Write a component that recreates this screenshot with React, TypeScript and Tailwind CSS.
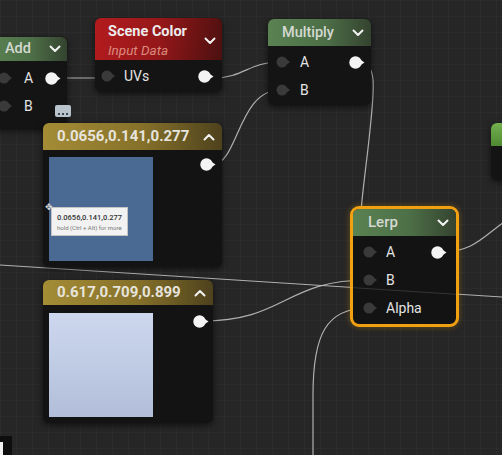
import React from 'react'

const greenHead = 'bg-[linear-gradient(90deg,#5a8252_0%,#4d6f47_55%,#34432f_100%)]'
const goldHead = 'bg-[linear-gradient(90deg,#a48c36_0%,#86712a_55%,#4e421d_100%)]'

function InPin() {
    return (
        <svg width="16" height="12" viewBox="0 0 16 12" className="shrink-0">
            <circle cx="6" cy="6" r="5.5" fill="#3a3a3a" />
            <path d="M10.5 3.2 L14 6 L10.5 8.8 Z" fill="#3a3a3a" />
        </svg>
    )
}

function OutPin() {
    return (
        <svg width="17" height="13" viewBox="0 0 17 13" className="shrink-0">
            <circle cx="6.5" cy="6.5" r="6.2" fill="#f4f4f4" />
            <path d="M11.5 3.8 L15.5 6.5 L11.5 9.2 Z" fill="#f4f4f4" />
        </svg>
    )
}

function Chevron({ up = false }: { up?: boolean }) {
    return (
        <svg width="12" height="8" viewBox="0 0 12 8" className="shrink-0">
            <path
                d={up ? 'M1.5 6.5 L6 2 L10.5 6.5' : 'M1.5 1.5 L6 6 L10.5 1.5'}
                fill="none"
                stroke="#f2f2f2"
                strokeWidth="2"
                strokeLinecap="round"
                strokeLinejoin="round"
            />
        </svg>
    )
}

function Wires() {
    return (
        <svg width="502" height="455" viewBox="0 0 502 455" className="absolute inset-0 pointer-events-none">
            <g fill="none" stroke="#c8c8c8" strokeWidth="1.2" strokeOpacity="0.85">
                {/* add -> scene color */}
                <path d="M52 78 L104 78" />
                {/* scene color -> multiply A */}
                <path d="M212 78 C245 78 248 62 280 62" />
                {/* constant -> multiply B */}
                <path d="M212 165 C238 165 238 90 280 90" />
                {/* multiply -> lerp A */}
                <path d="M359 62 C378 62 374 90 370 130 C364 190 352 252 368 252" />
                {/* lerp -> right node */}
                <path d="M442 252 C472 252 482 238 504 222" />
                {/* long wire */}
                <path d="M0 265 C150 274 300 284 502 297" />
                {/* constant 2 -> lerp B */}
                <path d="M202 321 C285 321 285 280 368 280" />
                {/* alpha from below */}
                <path d="M368 308 C326 308 313 335 313 395 L313 456" />
            </g>
        </svg>
    )
}

export default function App() {
    return (
        <div className="relative w-[502px] h-[455px] overflow-hidden bg-[#262626] bg-[linear-gradient(rgba(255,255,255,0.025)_1px,transparent_1px),linear-gradient(90deg,rgba(255,255,255,0.025)_1px,transparent_1px)] bg-[size:16px_16px] font-[Roboto,sans-serif] text-[#e4e4e4]">
            <Wires />

            {/* Add */}
            <div className="absolute left-[-12px] top-[37px] w-[79px] h-[92px] rounded-md bg-[#141414] shadow-[0_2px_6px_rgba(0,0,0,0.6)] overflow-hidden">
                <div className={`h-[24px] flex items-center justify-between pl-[17px] pr-[6px] ${greenHead}`}>
                    <span className="text-[14.5px] font-medium text-[#d4d9d2]">Add</span>
                    <Chevron />
                </div>
                <div className="pt-[3px]">
                    <div className="h-[28px] flex items-center pl-[10px] pr-[5px]">
                        <InPin />
                        <span className="ml-[10px] text-[14px]">A</span>
                        <span className="ml-auto"><OutPin /></span>
                    </div>
                    <div className="h-[28px] flex items-center pl-[10px]">
                        <InPin />
                        <span className="ml-[10px] text-[14px]">B</span>
                    </div>
                </div>
            </div>

            {/* comment bubble */}
            <div className="absolute left-[55px] top-[105px] w-[16px] h-[12px] rounded-[2px] bg-[#b9c3cc] flex items-end justify-center gap-[2px] pb-[2px]">
                <span className="w-[2px] h-[2px] bg-[#3b4650]" />
                <span className="w-[2px] h-[2px] bg-[#3b4650]" />
                <span className="w-[2px] h-[2px] bg-[#3b4650]" />
            </div>

            {/* Scene Color */}
            <div className="absolute left-[95px] top-[18px] w-[127px] h-[74px] rounded-md bg-[#141414] shadow-[0_2px_6px_rgba(0,0,0,0.6)] overflow-hidden">
                <div className="h-[42px] flex items-center justify-between pl-[13px] pr-[6px] pt-[3px] bg-[linear-gradient(100deg,#b31c1e_0%,#951719_50%,#4c1010_100%)]">
                    <div className="flex flex-col leading-[18px]">
                        <span className="text-[14.5px] font-bold text-[#ececec]">Scene Color</span>
                        <span className="text-[13.5px] italic text-[#dc8b7f]">Input Data</span>
                    </div>
                    <Chevron />
                </div>
                <div className="h-[32px] flex items-center pl-[6px] pr-[7px]">
                    <InPin />
                    <span className="ml-[7px] text-[14px]">UVs</span>
                    <span className="ml-auto"><OutPin /></span>
                </div>
            </div>

            {/* Multiply */}
            <div className="absolute left-[268px] top-[19px] w-[103px] h-[86px] rounded-md bg-[#141414] shadow-[0_2px_6px_rgba(0,0,0,0.6)] overflow-hidden">
                <div className={`h-[27px] flex items-center justify-between pl-[14px] pr-[7px] ${greenHead}`}>
                    <span className="text-[14.5px] font-medium text-[#d4d9d2]">Multiply</span>
                    <Chevron />
                </div>
                <div className="pt-[2px]">
                    <div className="h-[28px] flex items-center pl-[8px] pr-[5px]">
                        <InPin />
                        <span className="ml-[8px] text-[14px]">A</span>
                        <span className="ml-auto"><OutPin /></span>
                    </div>
                    <div className="h-[28px] flex items-center pl-[8px]">
                        <InPin />
                        <span className="ml-[8px] text-[14px]">B</span>
                    </div>
                </div>
            </div>

            {/* Constant 0.0656 */}
            <div className="absolute left-[43px] top-[123px] w-[179px] h-[144px] rounded-md bg-[#131313] shadow-[0_2px_6px_rgba(0,0,0,0.6)] overflow-hidden">
                <div className={`h-[27px] flex items-center justify-between pl-[14px] pr-[7px] ${goldHead}`}>
                    <span className="text-[15px] font-bold text-[#e6e4dc]">0.0656,0.141,0.277</span>
                    <Chevron up />
                </div>
                <div className="flex pt-[7px] pl-[6px] pr-[5px]">
                    <div className="relative w-[104px] h-[104px] bg-[#4a6a93]">
                        <span className="absolute left-[-4px] top-[46px] text-[9px] leading-none text-[#ddd]">✥</span>
                        <div className="absolute left-[2px] top-[50px] w-[77px] h-[29px] bg-[#f2f2f2] border border-[#c4c4c4] px-[5px] pt-[5px] leading-[10px] whitespace-nowrap">
                            <div className="text-[7.5px] font-medium text-[#333]">0.0656,0.141,0.277</div>
                            <div className="text-[6px] text-[#777]">hold (Ctrl + Alt) for more</div>
                        </div>
                    </div>
                    <span className="ml-auto mt-[1px]"><OutPin /></span>
                </div>
            </div>

            {/* Constant 0.617 */}
            <div className="absolute left-[43px] top-[280px] w-[170px] h-[143px] rounded-md bg-[#131313] shadow-[0_2px_6px_rgba(0,0,0,0.6)] overflow-hidden">
                <div className={`h-[25px] flex items-center justify-between pl-[14px] pr-[7px] ${goldHead}`}>
                    <span className="text-[15px] font-bold text-[#e6e4dc]">0.617,0.709,0.899</span>
                    <Chevron up />
                </div>
                <div className="flex pt-[8px] pl-[6px] pr-[3px]">
                    <div className="w-[104px] h-[104px] bg-[linear-gradient(180deg,#cdd8ef,#b2bdd9)]" />
                    <span className="ml-auto mt-[2px]"><OutPin /></span>
                </div>
            </div>

            {/* Lerp */}
            <div className="absolute left-[350px] top-[206px] w-[109px] h-[121px] rounded-[9px] border-[3px] border-[#f0a010] bg-[#131313] shadow-[0_0_6px_rgba(240,160,16,0.35)] overflow-hidden">
                <div className={`h-[27px] flex items-center justify-between pl-[15px] pr-[7px] ${greenHead}`}>
                    <span className="text-[15px] font-medium text-[#d4d9d2]">Lerp</span>
                    <Chevron />
                </div>
                <div className="pt-[2px]">
                    <div className="h-[28px] flex items-center pl-[10px] pr-[8px]">
                        <InPin />
                        <span className="ml-[7px] text-[14px]">A</span>
                        <span className="ml-auto"><OutPin /></span>
                    </div>
                    <div className="h-[28px] flex items-center pl-[10px]">
                        <InPin />
                        <span className="ml-[7px] text-[14px]">B</span>
                    </div>
                    <div className="h-[28px] flex items-center pl-[10px]">
                        <InPin />
                        <span className="ml-[7px] text-[14px]">Alpha</span>
                    </div>
                </div>
            </div>

            {/* the long wire shows faintly across the Lerp body */}
            <svg width="110" height="20" viewBox="350 280 110 20" className="absolute left-[350px] top-[280px] pointer-events-none">
                <path d="M350 287.5 C390 290 420 292 460 294.5" fill="none" stroke="#c8c8c8" strokeWidth="1" strokeOpacity="0.18" />
            </svg>

            {/* partial node on the right edge */}
            <div className="absolute left-[491px] top-[123px] w-[30px] h-[57px] rounded-md bg-[#141414] shadow-[0_2px_6px_rgba(0,0,0,0.6)] overflow-hidden">
                <div className="h-[23px] bg-[linear-gradient(180deg,#74b04e,#4f8a34)]" />
            </div>

            {/* corner fragment */}
            <div className="absolute left-0 top-[436px] w-[12px] h-[19px] bg-[#0e0e0e] pt-[6px]">
                <div className="w-[3px] h-full bg-[#f0f0f0]" />
            </div>
        </div>
    )
}
